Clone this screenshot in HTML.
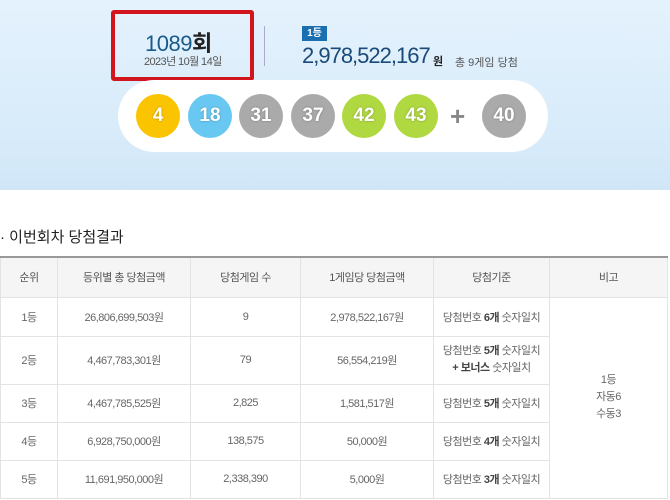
<!DOCTYPE html>
<html><head><meta charset="utf-8"><style>
*{margin:0;padding:0;box-sizing:border-box}
body{width:670px;height:500px;overflow:hidden;background:#fff;font-family:"Liberation Sans","Noto Sans CJK KR",sans-serif;position:relative}
.top{position:absolute;left:0;top:0;width:670px;height:190px;background:linear-gradient(#e4f2fd,#d6eaf9 80%,#d0e6f7)}
.red{position:absolute;left:111px;top:10px;width:143px;height:71px;border:4px solid #d2141c;border-radius:3px}
.ab{position:absolute;white-space:nowrap}
.pill{position:absolute;left:118px;top:80px;width:430px;height:72px;background:#fff;border-radius:36px}
.ball{position:absolute;width:44px;height:44px;border-radius:50%;color:#fff;font-weight:bold;font-size:19px;text-align:center;line-height:44px;top:94px;text-shadow:0 0 2px rgba(0,0,0,.3)}
.y{background:#fbc400}.b{background:#69c8f2}.g{background:#aaa}.gr{background:#b0d840}
table{position:absolute;left:0;top:256px;width:668px;border-collapse:collapse;font-size:11px;color:#666;letter-spacing:-0.5px}
td,th{border:1px solid #e3e3e3;text-align:center;font-weight:normal;vertical-align:middle}
th{background:#f5f5f5;height:40px;color:#555}
table{border-top:2px solid #999}
b{color:#444}
</style></head><body>
<div class="top"></div>
<div class="red"></div>
<div class="ab" style="left:145px;top:26px;font-size:22px;color:#1a5a8a;letter-spacing:-0.5px">1089<b style="color:#222">회</b></div>
<div class="ab" style="left:144px;top:53px;font-size:11px;color:#555;letter-spacing:-0.6px">2023년 10월 14일</div>
<div class="ab" style="left:264px;top:26px;width:1px;height:40px;background:#aac"></div>
<div class="ab" style="left:302px;top:26px;width:25px;height:15px;background:#1a6fb0;color:#fff;font-size:10px;font-weight:bold;text-align:center;line-height:15px">1등</div>
<div class="ab" style="left:302px;top:43px;font-size:22px;color:#1a4a78;letter-spacing:-1px">2,978,522,167</div>
<div class="ab" style="left:433px;top:53px;font-size:11px;font-weight:bold;color:#222">원</div>
<div class="ab" style="left:455px;top:54px;font-size:11px;color:#555">총 9게임 당첨</div>
<div class="pill"></div>
<div class="ball y" style="left:136px">4</div>
<div class="ball b" style="left:188px">18</div>
<div class="ball g" style="left:239px">31</div>
<div class="ball g" style="left:291px">37</div>
<div class="ball gr" style="left:342px">42</div>
<div class="ball gr" style="left:394px">43</div>
<div class="ab" style="left:450px;top:101px;font-size:26px;color:#888;font-weight:bold">+</div>
<div class="ball g" style="left:482px">40</div>
<div class="ab" style="left:0;top:226px;font-size:15px;color:#222">· 이번회차 당첨결과</div>
<table>
<tr><th style="width:57px">순위</th><th style="width:133px">등위별 총 당첨금액</th><th style="width:110px">당첨게임 수</th><th style="width:133px">1게임당 당첨금액</th><th style="width:116px">당첨기준</th><th>비고</th></tr>
<tr style="height:39px"><td>1등</td><td>26,806,699,503원</td><td>9</td><td>2,978,522,167원</td><td>당첨번호 <b>6개</b> 숫자일치</td><td rowspan="5" style="line-height:17px">1등<br>자동6<br>수동3</td></tr>
<tr style="height:48px"><td>2등</td><td>4,467,783,301원</td><td>79</td><td>56,554,219원</td><td style="line-height:17px">당첨번호 <b>5개</b> 숫자일치<br><b>+ 보너스</b> 숫자일치</td></tr>
<tr style="height:38px"><td>3등</td><td>4,467,785,525원</td><td>2,825</td><td>1,581,517원</td><td>당첨번호 <b>5개</b> 숫자일치</td></tr>
<tr style="height:38px"><td>4등</td><td>6,928,750,000원</td><td>138,575</td><td>50,000원</td><td>당첨번호 <b>4개</b> 숫자일치</td></tr>
<tr style="height:38px"><td>5등</td><td>11,691,950,000원</td><td>2,338,390</td><td>5,000원</td><td>당첨번호 <b>3개</b> 숫자일치</td></tr>
</table>
</body></html>
